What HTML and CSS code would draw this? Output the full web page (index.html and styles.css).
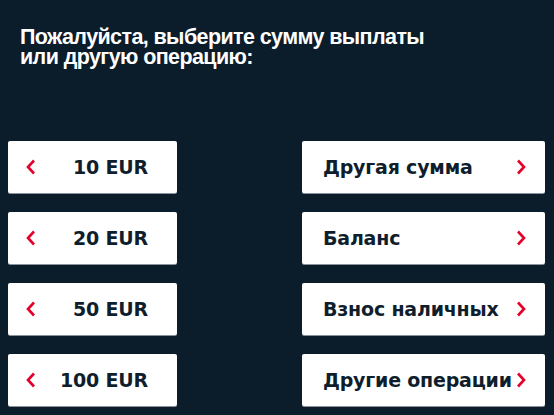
FILE: index.html
```html
<!DOCTYPE html>
<html lang="ru">
<head>
  <meta charset="UTF-8">
  <meta name="viewport" content="width=device-width, initial-scale=1.0">
  <title>Выбор суммы</title>
  <link rel="stylesheet" href="styles.css">
</head>
<body>
  <h1 class="prompt">Пожалуйста, выберите сумму выплаты<br>или другую операцию:</h1>

  <div class="menu">
    <button class="opt opt-left">
      <svg class="chev" viewBox="0 0 10 16"><polyline points="8,1.5 2,8 8,14.5"/></svg>
      <span>10 EUR</span>
    </button>
    <button class="opt opt-right">
      <span>Другая сумма</span>
      <svg class="chev" viewBox="0 0 10 16"><polyline points="2,1.5 8,8 2,14.5"/></svg>
    </button>

    <button class="opt opt-left">
      <svg class="chev" viewBox="0 0 10 16"><polyline points="8,1.5 2,8 8,14.5"/></svg>
      <span>20 EUR</span>
    </button>
    <button class="opt opt-right">
      <span>Баланс</span>
      <svg class="chev" viewBox="0 0 10 16"><polyline points="2,1.5 8,8 2,14.5"/></svg>
    </button>

    <button class="opt opt-left">
      <svg class="chev" viewBox="0 0 10 16"><polyline points="8,1.5 2,8 8,14.5"/></svg>
      <span>50 EUR</span>
    </button>
    <button class="opt opt-right">
      <span>Взнос наличных</span>
      <svg class="chev" viewBox="0 0 10 16"><polyline points="2,1.5 8,8 2,14.5"/></svg>
    </button>

    <button class="opt opt-left">
      <svg class="chev" viewBox="0 0 10 16"><polyline points="8,1.5 2,8 8,14.5"/></svg>
      <span>100 EUR</span>
    </button>
    <button class="opt opt-right">
      <span>Другие операции</span>
      <svg class="chev" viewBox="0 0 10 16"><polyline points="2,1.5 8,8 2,14.5"/></svg>
    </button>
  </div>
</body>
</html>
```

FILE: styles.css
```css
html, body {
  height: 100%;
}
body {
  font-family: "Liberation Sans", Arial, sans-serif;
  background-color: #0b1c2b;
  color: #fff;
  margin: 0;
  padding: 0 9px 0 8px;
  overflow: hidden;
}
.prompt {
  margin: 0;
  padding: 27px 0 0 12px;
  font-size: 21.5px;
  line-height: 20px;
  font-weight: bold;
  letter-spacing: -0.6px;
}
.menu {
  display: grid;
  grid-template-columns: 169px 1fr 243px;
  row-gap: 19px;
  margin-top: 74px;
}
.opt {
  display: flex;
  align-items: center;
  height: 52px;
  background: #fff;
  border: none;
  border-radius: 2px;
  box-shadow: 0 1px 0 #8a939c;
  font-family: "DejaVu Sans", sans-serif;
  font-size: 19px;
  font-weight: bold;
  color: #0f1e2c;
  letter-spacing: -0.2px;
  white-space: nowrap;
  padding: 0;
  cursor: pointer;
}
.opt-left {
  grid-column: 1;
  justify-content: space-between;
  padding: 0 29px 0 18px;
}
.opt-right {
  grid-column: 3;
  justify-content: space-between;
  padding: 0 19px 0 21px;
}
.chev {
  width: 10px;
  height: 16px;
  flex: none;
}
.chev polyline {
  fill: none;
  stroke: #e4002b;
  stroke-width: 2.6;
}
```
